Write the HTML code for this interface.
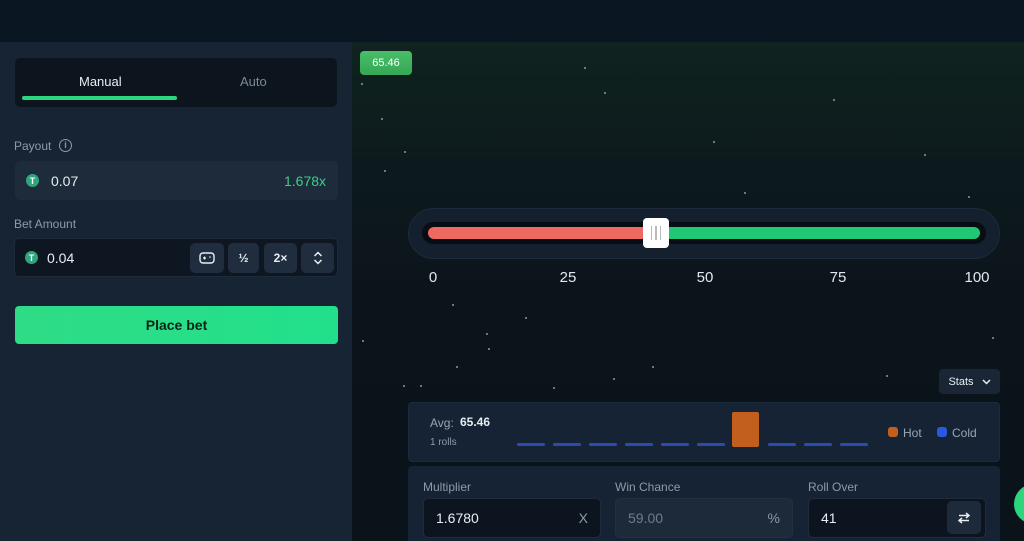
<!DOCTYPE html>
<html><head><meta charset="utf-8"><style>
*{margin:0;padding:0;box-sizing:border-box}
html{width:1024px;height:541px;overflow:hidden}
body{width:1024px;height:541px;overflow:hidden;background:#0a131b;font-family:"Liberation Sans",sans-serif;position:relative;color:#e8edf2}
.a{position:absolute}
.top{left:0;top:0;width:1024px;height:42px;background:#0a1621}
.left{left:0;top:42px;width:352px;height:499px;background:#172434}
.right{left:352px;top:42px;width:672px;height:499px;background:linear-gradient(180deg,#0f231f 0%,#0d1a1d 25%,#0b141b 50%,#0a121a 100%)}
.star{position:absolute;width:2px;height:2px;border-radius:50%;background:#8a9aa5}
.lbl{font-size:12px;color:#8d9aa8}
.btn{background:#1f2d3e;border-radius:5px;display:flex;align-items:center;justify-content:center;font-size:12px;font-weight:bold;color:#e8edf2}
.coin{width:13px;height:13px;border-radius:50%;background:#2fa57e;color:#fff;font-size:9px;font-weight:bold;display:flex;align-items:center;justify-content:center}
.dash{position:absolute;top:443px;width:28px;height:3px;background:#2a4cb0;border-radius:2px}
.tk{position:absolute;top:269px;font-size:15px;color:#e4e8ee;transform:translateX(-50%)}
.inp{position:absolute;top:498px;height:40px;border-radius:5px;font-size:14px;padding-left:12px;display:flex;align-items:center}
</style></head><body>
<div class="a top"></div>
<div class="a left"></div>
<div class="a right"></div>
<div class="star" style="left:361px;top:83px"></div><div class="star" style="left:381px;top:118px"></div>
<div class="star" style="left:404px;top:151px"></div><div class="star" style="left:384px;top:170px"></div>
<div class="star" style="left:604px;top:92px"></div><div class="star" style="left:833px;top:99px"></div>
<div class="star" style="left:713px;top:141px"></div><div class="star" style="left:744px;top:192px"></div>
<div class="star" style="left:924px;top:154px"></div><div class="star" style="left:968px;top:196px"></div>
<div class="star" style="left:584px;top:67px"></div>
<div class="star" style="left:452px;top:304px"></div><div class="star" style="left:525px;top:317px"></div>
<div class="star" style="left:486px;top:333px"></div><div class="star" style="left:488px;top:348px"></div>
<div class="star" style="left:362px;top:340px"></div><div class="star" style="left:456px;top:366px"></div>
<div class="star" style="left:403px;top:385px"></div><div class="star" style="left:553px;top:387px"></div>
<div class="star" style="left:652px;top:366px"></div><div class="star" style="left:992px;top:337px"></div>
<div class="star" style="left:886px;top:375px"></div>
<div class="star" style="left:420px;top:385px"></div><div class="star" style="left:613px;top:378px"></div>

<div class="a" style="left:15px;top:58px;width:322px;height:49px;background:#0c141d;border-radius:5px"></div>
<div class="a" style="left:79px;top:74px;font-size:13px;color:#e8edf2">Manual</div>
<div class="a" style="left:240px;top:74px;font-size:13px;color:#7d8896">Auto</div>
<div class="a" style="left:22px;top:96px;width:155px;height:4px;background:#2bd67f;border-radius:2px"></div>

<div class="a lbl" style="left:14px;top:139px">Payout</div>
<div class="a" style="left:59px;top:139px;width:13px;height:13px;border:1.3px solid #8d9aa8;border-radius:50%;font-size:9px;color:#8d9aa8;text-align:center;line-height:11px;font-weight:bold">i</div>
<div class="a" style="left:15px;top:161px;width:323px;height:39px;background:#1d2b3b;border-radius:5px"></div>
<div class="a coin" style="left:26px;top:174px">T</div>
<div class="a" style="left:51px;top:173px;font-size:14px">0.07</div>
<div class="a" style="left:284px;top:173px;font-size:14px;color:#3ccf86">1.678x</div>

<div class="a lbl" style="left:14px;top:217px">Bet Amount</div>
<div class="a" style="left:14px;top:238px;width:324px;height:39px;background:#0e1721;border-radius:5px;border:1px solid #1c2a3a"></div>
<div class="a coin" style="left:25px;top:251px">T</div>
<div class="a" style="left:47px;top:250px;font-size:14px">0.04</div>
<div class="a btn" style="left:190px;top:243px;width:34px;height:30px"><svg width="16" height="12" viewBox="0 0 16 12"><rect x="1" y="1" width="14" height="10" rx="3" fill="none" stroke="#e8edf2" stroke-width="1.4"/><path d="M4 6h3M5.5 4.5v3" stroke="#e8edf2" stroke-width="1.2"/><circle cx="11" cy="5" r=".8" fill="#e8edf2"/></svg></div>
<div class="a btn" style="left:228px;top:243px;width:31px;height:30px">½</div>
<div class="a btn" style="left:264px;top:243px;width:33px;height:30px">2×</div>
<div class="a btn" style="left:301px;top:243px;width:33px;height:30px"><svg width="10" height="16" viewBox="0 0 10 16"><path d="M1.5 6L5 2.5 8.5 6M1.5 10L5 13.5 8.5 10" fill="none" stroke="#e8edf2" stroke-width="1.5"/></svg></div>

<div class="a" style="left:15px;top:306px;width:323px;height:38px;background:linear-gradient(90deg,#2fdc86,#22e08a);border-radius:4px;color:#0f2418;font-weight:bold;font-size:14px;display:flex;align-items:center;justify-content:center">Place bet</div>

<div class="a" style="left:360px;top:51px;width:52px;height:24px;background:linear-gradient(#48bf68,#35a756);border-radius:4px;font-size:11px;color:#fff;display:flex;align-items:center;justify-content:center">65.46</div>

<div class="a" style="left:408px;top:208px;width:592px;height:51px;background:#15202e;border-radius:26px;border:1px solid #1c2a3b"></div>
<div class="a" style="left:422px;top:222px;width:564px;height:22px;background:#070d12;border-radius:11px"></div>
<div class="a" style="left:428px;top:227px;width:230px;height:12px;background:#ee6a60;border-radius:6px 0 0 6px"></div>
<div class="a" style="left:656px;top:227px;width:324px;height:12px;background:#20c873;border-radius:0 6px 6px 0"></div>
<div class="a" style="left:643px;top:218px;width:26px;height:30px;background:#fff;border-radius:4px;display:flex;gap:3px;align-items:center;justify-content:center"><i style="width:1.5px;height:14px;background:#bbb"></i><i style="width:1.5px;height:14px;background:#bbb"></i><i style="width:1.5px;height:14px;background:#bbb"></i></div>
<div class="tk" style="left:433px">0</div><div class="tk" style="left:568px">25</div><div class="tk" style="left:705px">50</div><div class="tk" style="left:838px">75</div><div class="tk" style="left:977px">100</div>

<div class="a" style="left:939px;top:369px;width:61px;height:25px;background:#1a2636;border-radius:4px;font-size:11px;display:flex;align-items:center;justify-content:center;gap:8px">Stats <svg width="9" height="6" viewBox="0 0 9 6"><path d="M1 1l3.5 3.5L8 1" fill="none" stroke="#e8edf2" stroke-width="1.5"/></svg></div>

<div class="a" style="left:408px;top:402px;width:592px;height:60px;background:#162334;border-radius:4px;border:1px solid #1c2b3c"></div>
<div class="a" style="left:430px;top:416px;font-size:12px;color:#9aa6b3">Avg:</div>
<div class="a" style="left:460px;top:415px;font-size:12px;font-weight:bold">65.46</div>
<div class="a" style="left:430px;top:437px;font-size:10px;color:#8d9aa8">1 rolls</div>
<div class="dash" style="left:517px"></div><div class="dash" style="left:553px"></div><div class="dash" style="left:589px"></div><div class="dash" style="left:625px"></div><div class="dash" style="left:661px"></div><div class="dash" style="left:697px"></div>
<div class="a" style="left:732px;top:412px;width:27px;height:35px;background:#c35f1c;border-radius:2px"></div>
<div class="dash" style="left:768px"></div><div class="dash" style="left:804px"></div><div class="dash" style="left:840px"></div>
<div class="a" style="left:888px;top:427px;width:10px;height:10px;background:#c35f1c;border-radius:3px"></div>
<div class="a" style="left:903px;top:426px;font-size:12px;color:#9aa6b3">Hot</div>
<div class="a" style="left:937px;top:427px;width:10px;height:10px;background:#2a59e0;border-radius:3px"></div>
<div class="a" style="left:952px;top:426px;font-size:12px;color:#9aa6b3">Cold</div>

<div class="a" style="left:408px;top:466px;width:592px;height:80px;background:#162334;border-radius:4px"></div>
<div class="a lbl" style="left:423px;top:480px">Multiplier</div>
<div class="a lbl" style="left:615px;top:480px">Win Chance</div>
<div class="a lbl" style="left:808px;top:480px">Roll Over</div>
<div class="inp" style="left:423px;width:178px;background:#0c151f;border:1px solid #1e2c3c">1.6780<span style="position:absolute;right:12px;color:#8d9aa8">X</span></div>
<div class="inp" style="left:615px;width:178px;background:#1d2a3a;border:1px solid #223142;color:#6f7c8a">59.00<span style="position:absolute;right:12px;color:#8d9aa8">%</span></div>
<div class="inp" style="left:808px;width:178px;background:#0c151f;border:1px solid #1e2c3c">41</div>
<div class="a btn" style="left:947px;top:501px;width:34px;height:33px;background:#1d2a3a"><svg width="14" height="14" viewBox="0 0 14 14"><path d="M2 4.5h10M9 2l3 2.5-3 2.5M12 9.5H2M5 7l-3 2.5 3 2.5" fill="none" stroke="#e8edf2" stroke-width="1.5"/></svg></div>

<div class="a" style="left:1014px;top:484px;width:40px;height:40px;border-radius:50%;background:#2bd67f"></div>
</body></html>
